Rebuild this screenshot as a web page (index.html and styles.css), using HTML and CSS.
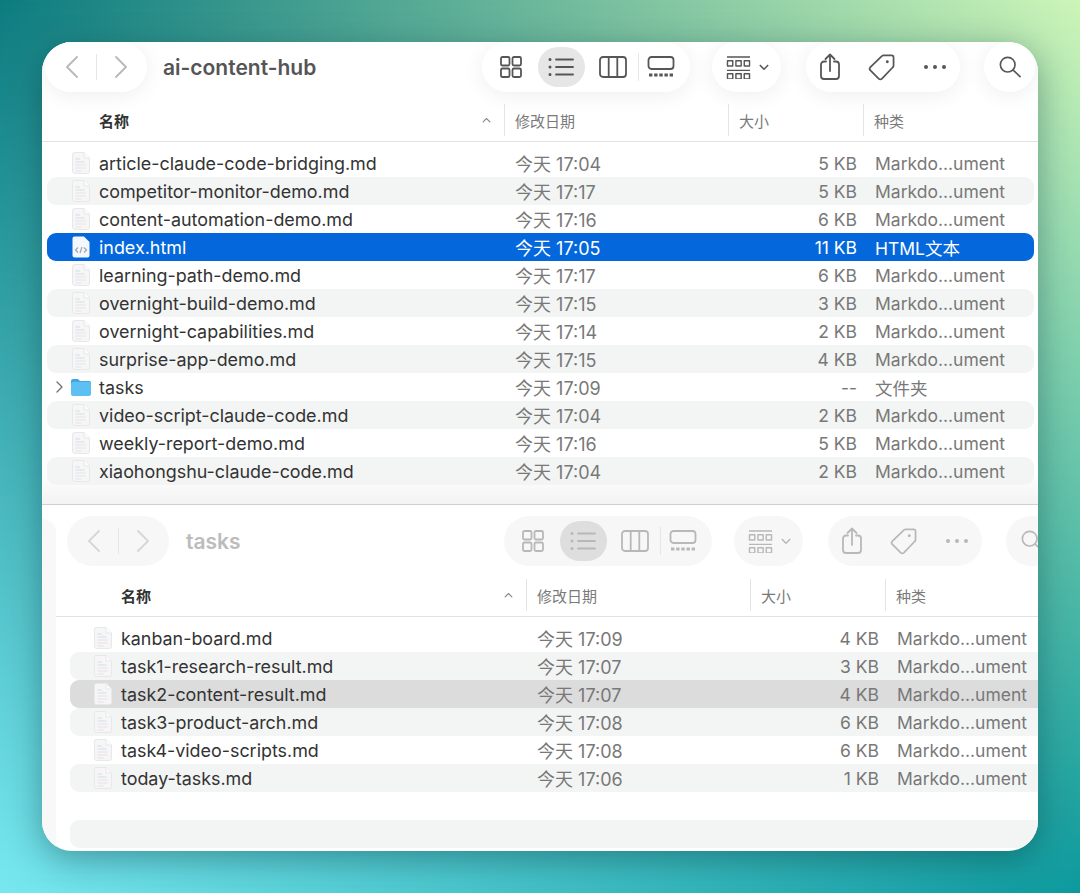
FILE: index.html
```html
<!DOCTYPE html>
<html lang="zh-CN">
<head>
  <meta charset="UTF-8" />
  <meta name="viewport" content="width=device-width, initial-scale=1.0"/>
  <title>ai-content-hub</title>
  <link rel="stylesheet" href="styles.css">
</head>
<body>

<svg class="sprites" width="0" height="0">
  <symbol id="i-back" viewBox="0 0 14 24"><path d="M12 2 2 12l10 10"/></symbol>
  <symbol id="i-forward" viewBox="0 0 14 24"><path d="m2 2 10 10L2 22"/></symbol>
  <symbol id="i-grid" viewBox="0 0 22 22"><rect x="1" y="1" width="8.5" height="8.5" rx="1.5"/><rect x="12.5" y="1" width="8.5" height="8.5" rx="1.5"/><rect x="1" y="12.5" width="8.5" height="8.5" rx="1.5"/><rect x="12.5" y="12.5" width="8.5" height="8.5" rx="1.5"/></symbol>
  <symbol id="i-list" viewBox="0 0 26 22"><path d="M8 3.500h17M8 11h17M8 18.500h17"/><path class="dots" d="M2 3.500h.01M2 11h.01M2 18.500h.01"/></symbol>
  <symbol id="i-columns" viewBox="0 0 28 22"><rect x="1" y="1" width="26" height="20" rx="3"/><path d="M9.700 1v20M18.300 1v20"/></symbol>
  <symbol id="i-gallery" viewBox="0 0 28 22"><rect x="1.500" y="1" width="25" height="12" rx="3"/><path class="dash" d="M2 19h24"/></symbol>
  <symbol id="i-group" viewBox="0 0 26 24"><path class="thin" d="M1 1h24M1 15h24"/><path class="thin" d="M1.500 5h5.500v5.500H1.500zM10.300 5h5.500v5.500h-5.500zM19 5h5.500v5.500H19zM1.500 18.500h5.500V24H1.500zM10.300 18.500h5.500V24h-5.500zM19 18.500h5.500V24H19z"/></symbol>
  <symbol id="i-chevron" viewBox="0 0 12 8"><path d="m1.500 1.500 4.500 4.500 4.500-4.500"/></symbol>
  <symbol id="i-share" viewBox="0 0 20 27"><path d="M6 8.500H4a3 3 0 0 0-3 3V23a3 3 0 0 0 3 3h12a3 3 0 0 0 3-3V11.500a3 3 0 0 0-3-3h-2"/><path d="M10 18V1.500M5.500 6 10 1.500 14.500 6"/></symbol>
  <symbol id="i-tag" viewBox="0 0 28 28"><path d="M16 1.500h8.500A2 2 0 0 1 26.500 3.500V12a3 3 0 0 1-1 2L14.500 25.500a2.500 2.500 0 0 1-3.500 0L2.500 17a2.500 2.500 0 0 1 0-3.500L14 2.500a3 3 0 0 1 2-1z"/><circle class="solid" cx="20" cy="8" r="1.500"/></symbol>
  <symbol id="i-more" viewBox="0 0 22 6"><circle class="solid" cx="2" cy="3" r="2"/><circle class="solid" cx="11" cy="3" r="2"/><circle class="solid" cx="20" cy="3" r="2"/></symbol>
  <symbol id="i-search" viewBox="0 0 24 24"><circle cx="9.500" cy="9.500" r="8"/><path d="m15.500 15.500 7.500 7"/></symbol>
  <symbol id="i-doc" viewBox="0 0 18 22">
    <path class="doc-page" d="M2.500.5H12L17.500 6v13.500a2 2 0 0 1-2 2h-13a2 2 0 0 1-2-2v-17a2 2 0 0 1 2-2z"/>
    <path class="doc-fold" d="M12 .5V6h5.500"/>
    <path class="doc-a" d="M3.500 7H8M3.500 10h9"/>
    <path class="doc-b" d="M3.500 13h10M3.500 16h10M3.500 19h6"/>
  </symbol>
  <symbol id="i-html" viewBox="0 0 18 22">
    <path class="html-page" d="M2.500.5H12L17.500 6v13.500a2 2 0 0 1-2 2h-13a2 2 0 0 1-2-2v-17a2 2 0 0 1 2-2z"/>
    <path class="html-code" d="M6 11.500 3.500 14 6 16.500M12 11.500l2.500 2.500-2.500 2.500M10 11l-2 6"/>
  </symbol>
  <symbol id="i-folder" viewBox="0 0 20 17">
    <path class="folder-back" d="M2 0h5l2 2h9a2 2 0 0 1 2 2v2H0V2a2 2 0 0 1 2-2z"/>
    <rect class="folder-front" y="3" width="20" height="14" rx="2"/>
  </symbol>
</svg>

<div class="desktop">
  <div class="window">

    <section class="pane pane-main">
      <div class="toolbar">
        <div class="capsule nav">
          <svg class="ic ic-nav"><use href="#i-back"/></svg>
          <span class="nav-sep"></span>
          <svg class="ic ic-nav"><use href="#i-forward"/></svg>
        </div>
        <h1 class="title">ai-content-hub</h1>
        <div class="capsule views">
          <span class="tool"><svg class="ic ic-grid"><use href="#i-grid"/></svg></span>
          <span class="tool on"><svg class="ic ic-list"><use href="#i-list"/></svg></span>
          <span class="tool tool-col"><svg class="ic ic-wide"><use href="#i-columns"/></svg></span>
          <span class="tool-sep"></span>
          <span class="tool tool-gal"><svg class="ic ic-wide"><use href="#i-gallery"/></svg></span>
        </div>
        <div class="capsule group">
          <svg class="ic ic-group"><use href="#i-group"/></svg>
          <svg class="ic ic-chev"><use href="#i-chevron"/></svg>
        </div>
        <div class="capsule actions">
          <svg class="ic ic-share"><use href="#i-share"/></svg>
          <svg class="ic ic-tag"><use href="#i-tag"/></svg>
          <svg class="ic ic-more"><use href="#i-more"/></svg>
        </div>
        <div class="capsule search">
          <svg class="ic ic-search"><use href="#i-search"/></svg>
        </div>
      </div>

      <div class="columns">
        <div class="col col-name">名称<svg class="ic ic-sort"><use href="#i-chevron"/></svg></div>
        <div class="col">修改日期</div>
        <div class="col">大小</div>
        <div class="col">种类</div>
      </div>

      <div class="rows">
        <div class="row"><span></span><svg class="ficon"><use href="#i-doc"/></svg><span class="name">article-claude-code-bridging.md</span><span class="meta date">今天 17:04</span><span class="meta size">5 KB</span><span class="meta kind">Markdo...ument</span></div>
        <div class="row alt"><span></span><svg class="ficon"><use href="#i-doc"/></svg><span class="name">competitor-monitor-demo.md</span><span class="meta date">今天 17:17</span><span class="meta size">5 KB</span><span class="meta kind">Markdo...ument</span></div>
        <div class="row"><span></span><svg class="ficon"><use href="#i-doc"/></svg><span class="name">content-automation-demo.md</span><span class="meta date">今天 17:16</span><span class="meta size">6 KB</span><span class="meta kind">Markdo...ument</span></div>
        <div class="row selected"><span></span><svg class="ficon"><use href="#i-html"/></svg><span class="name">index.html</span><span class="meta date">今天 17:05</span><span class="meta size">11 KB</span><span class="meta kind">HTML文本</span></div>
        <div class="row"><span></span><svg class="ficon"><use href="#i-doc"/></svg><span class="name">learning-path-demo.md</span><span class="meta date">今天 17:17</span><span class="meta size">6 KB</span><span class="meta kind">Markdo...ument</span></div>
        <div class="row alt"><span></span><svg class="ficon"><use href="#i-doc"/></svg><span class="name">overnight-build-demo.md</span><span class="meta date">今天 17:15</span><span class="meta size">3 KB</span><span class="meta kind">Markdo...ument</span></div>
        <div class="row"><span></span><svg class="ficon"><use href="#i-doc"/></svg><span class="name">overnight-capabilities.md</span><span class="meta date">今天 17:14</span><span class="meta size">2 KB</span><span class="meta kind">Markdo...ument</span></div>
        <div class="row alt"><span></span><svg class="ficon"><use href="#i-doc"/></svg><span class="name">surprise-app-demo.md</span><span class="meta date">今天 17:15</span><span class="meta size">4 KB</span><span class="meta kind">Markdo...ument</span></div>
        <div class="row"><svg class="ic ic-disclose"><use href="#i-forward"/></svg><svg class="ficon ficon-folder"><use href="#i-folder"/></svg><span class="name">tasks</span><span class="meta date">今天 17:09</span><span class="meta size">--</span><span class="meta kind">文件夹</span></div>
        <div class="row alt"><span></span><svg class="ficon"><use href="#i-doc"/></svg><span class="name">video-script-claude-code.md</span><span class="meta date">今天 17:04</span><span class="meta size">2 KB</span><span class="meta kind">Markdo...ument</span></div>
        <div class="row"><span></span><svg class="ficon"><use href="#i-doc"/></svg><span class="name">weekly-report-demo.md</span><span class="meta date">今天 17:16</span><span class="meta size">5 KB</span><span class="meta kind">Markdo...ument</span></div>
        <div class="row alt"><span></span><svg class="ficon"><use href="#i-doc"/></svg><span class="name">xiaohongshu-claude-code.md</span><span class="meta date">今天 17:04</span><span class="meta size">2 KB</span><span class="meta kind">Markdo...ument</span></div>
      </div>
    </section>

    <section class="pane pane-tasks">
      <div class="toolbar">
        <div class="capsule nav">
          <svg class="ic ic-nav"><use href="#i-back"/></svg>
          <span class="nav-sep"></span>
          <svg class="ic ic-nav"><use href="#i-forward"/></svg>
        </div>
        <h2 class="title">tasks</h2>
        <div class="capsule views">
          <span class="tool"><svg class="ic ic-grid"><use href="#i-grid"/></svg></span>
          <span class="tool on"><svg class="ic ic-list"><use href="#i-list"/></svg></span>
          <span class="tool tool-col"><svg class="ic ic-wide"><use href="#i-columns"/></svg></span>
          <span class="tool-sep"></span>
          <span class="tool tool-gal"><svg class="ic ic-wide"><use href="#i-gallery"/></svg></span>
        </div>
        <div class="capsule group">
          <svg class="ic ic-group"><use href="#i-group"/></svg>
          <svg class="ic ic-chev"><use href="#i-chevron"/></svg>
        </div>
        <div class="capsule actions">
          <svg class="ic ic-share"><use href="#i-share"/></svg>
          <svg class="ic ic-tag"><use href="#i-tag"/></svg>
          <svg class="ic ic-more"><use href="#i-more"/></svg>
        </div>
        <div class="capsule search">
          <svg class="ic ic-search"><use href="#i-search"/></svg>
        </div>
      </div>

      <div class="columns">
        <div class="col col-name">名称<svg class="ic ic-sort"><use href="#i-chevron"/></svg></div>
        <div class="col">修改日期</div>
        <div class="col">大小</div>
        <div class="col">种类</div>
      </div>

      <div class="rows">
        <div class="row"><span></span><svg class="ficon"><use href="#i-doc"/></svg><span class="name">kanban-board.md</span><span class="meta date">今天 17:09</span><span class="meta size">4 KB</span><span class="meta kind">Markdo...ument</span></div>
        <div class="row alt"><span></span><svg class="ficon"><use href="#i-doc"/></svg><span class="name">task1-research-result.md</span><span class="meta date">今天 17:07</span><span class="meta size">3 KB</span><span class="meta kind">Markdo...ument</span></div>
        <div class="row picked"><span></span><svg class="ficon"><use href="#i-doc"/></svg><span class="name">task2-content-result.md</span><span class="meta date">今天 17:07</span><span class="meta size">4 KB</span><span class="meta kind">Markdo...ument</span></div>
        <div class="row alt"><span></span><svg class="ficon"><use href="#i-doc"/></svg><span class="name">task3-product-arch.md</span><span class="meta date">今天 17:08</span><span class="meta size">6 KB</span><span class="meta kind">Markdo...ument</span></div>
        <div class="row"><span></span><svg class="ficon"><use href="#i-doc"/></svg><span class="name">task4-video-scripts.md</span><span class="meta date">今天 17:08</span><span class="meta size">6 KB</span><span class="meta kind">Markdo...ument</span></div>
        <div class="row alt"><span></span><svg class="ficon"><use href="#i-doc"/></svg><span class="name">today-tasks.md</span><span class="meta date">今天 17:06</span><span class="meta size">1 KB</span><span class="meta kind">Markdo...ument</span></div>
        <div class="row"></div>
        <div class="row alt"></div>
      </div>
    </section>

  </div>
</div>

</body>
</html>
```

FILE: styles.css
```css
* {
  margin: 0;
  padding: 0;
  box-sizing: border-box;
}

body {
  font-family: Inter, "Noto Sans CJK SC", sans-serif;
  color: #333;
  overflow: hidden;
}

.sprites {
  display: block;
  height: 0;
}

/* four corner wash: two horizontal ramps, the lower one faded in */
.desktop {
  position: relative;
  height: 893px;
  padding: 42px;
  background: linear-gradient(90deg, #0d7c80, #6db89b 50%, #cdf5b8);
}

.desktop::before {
  content: "";
  position: absolute;
  inset: 0;
  background: linear-gradient(90deg, #78e8f0, #0c999d);
  -webkit-mask-image: linear-gradient(180deg, transparent, #000);
  mask-image: linear-gradient(180deg, transparent, #000);
}

.window {
  position: relative;
  height: 809px;
  display: flex;
  flex-direction: column;
  background: #fff;
  border-radius: 30px;
  overflow: hidden;
  box-shadow: 0 8px 34px rgba(0, 40, 50, 0.38);
}

.pane {
  overflow: hidden;
}

.pane-main {
  height: 463px;
  background: linear-gradient(180deg, #fff 0, #fff 430px, #f3f3f3 100%);
  border-bottom: 1px solid #cfcfcf;
}

.pane-main > * {
  width: 996px;
}

/* second window peeks out behind the strip on the left */
.pane-tasks {
  position: relative;
  flex: 1;
  padding-left: 14px;
}

.pane-tasks::before {
  content: "";
  position: absolute;
  left: 0;
  top: 14px;
  bottom: 0;
  width: 14px;
  background: #f8f8f8;
  border-top-right-radius: 14px;
}

.pane-tasks > * {
  width: 996px;
  margin-left: 8px;
}

/* toolbar */
.toolbar {
  display: flex;
  align-items: center;
  height: 50px;
  padding: 0 3px;
}

.pane-tasks .toolbar {
  margin-top: 11px;
}

.capsule {
  display: flex;
  align-items: center;
  height: 50px;
  background: #fff;
  border-radius: 25px;
  box-shadow: 0 3px 22px rgba(0, 0, 0, 0.07);
  color: #565656;
  flex-shrink: 0;
}

.pane-tasks .capsule {
  background: #f7f7f7;
  box-shadow: none;
  color: #b8b8b8;
}

.ic {
  display: block;
  flex-shrink: 0;
  fill: none;
  stroke: currentColor;
  stroke-width: 1.800;
  stroke-linecap: round;
  stroke-linejoin: round;
  overflow: visible;
}

.dots {
  stroke-width: 3;
}

.dash {
  stroke-width: 3;
  stroke-dasharray: 3.400 1.750;
  stroke-linecap: butt;
}

.thin {
  stroke-width: 1.500;
  stroke-linecap: butt;
}

.solid {
  fill: currentColor;
  stroke: none;
}

.nav {
  width: 102px;
  justify-content: center;
  gap: 17px;
  color: #b8b8b8;
}

.pane-tasks .nav {
  color: #d6d6d6;
}

.ic-nav {
  width: 14px;
  height: 24px;
}

.nav-sep {
  width: 1px;
  height: 26px;
  background: #e6e6e6;
}

.title {
  flex: 1;
  margin-left: 16px;
  font-size: 21px;
  font-weight: 600;
  color: #555;
}

.pane-tasks .title {
  margin-left: 17px;
  color: #bcbcbc;
}

.views {
  width: 208px;
  padding-left: 4px;
  margin-right: 22px;
}

.tool {
  display: flex;
  align-items: center;
  justify-content: center;
  width: 47px;
  height: 40px;
  margin: 0 1.500px;
  border-radius: 20px;
}

.tool.on {
  background: #e6e6e6;
}

.pane-tasks .tool.on {
  background: #dedede;
}

.tool-col {
  margin-left: 3px;
}

.tool-gal {
  margin-left: -1px;
}

.tool-sep {
  width: 1px;
  height: 28px;
  background: #e6e6e6;
}

.ic-grid {
  width: 22px;
  height: 22px;
}

.ic-list {
  width: 26px;
  height: 22px;
}

.ic-wide {
  width: 28px;
  height: 22px;
}

.group {
  width: 69px;
  padding-left: 14px;
  gap: 8px;
  margin-right: 25px;
}

.ic-group {
  width: 25px;
  height: 23px;
}

.ic-chev {
  width: 10px;
  height: 7px;
}

.actions {
  width: 154px;
  justify-content: space-around;
  margin-right: 24px;
}

.ic-share {
  width: 20px;
  height: 27px;
  margin-top: -2px;
}

.ic-tag {
  width: 27px;
  height: 27px;
}

.ic-more {
  width: 22px;
  height: 6px;
}

.search {
  width: 51px;
  justify-content: center;
}

.ic-search {
  width: 22px;
  height: 22px;
}

/* column headers */
.columns {
  display: grid;
  grid-template-columns: 462px 224px 135px 1fr;
  height: 42px;
  margin-top: 8px;
  border-bottom: 1px solid #e2e2e2;
  padding-bottom: 3px;
  font-size: 15px;
  color: #7a7a7a;
}

.pane-tasks .columns {
  width: 1004px;
  margin: 9px 0 0;
  padding-left: 8px;
}

.col {
  display: flex;
  align-items: center;
  padding-left: 10px;
  border-left: 1px solid #e4e4e4;
  margin: 4px 0 2px;
}

.col-name {
  justify-content: space-between;
  padding: 0 12px 0 57px;
  border-left: 0;
  font-weight: 600;
  color: #333;
}

.ic-sort {
  width: 11px;
  height: 6px;
  transform: rotate(180deg);
  color: #8a8a8a;
  stroke-width: 1.500;
}

/* file rows */
.rows {
  padding-top: 7px;
}

.row {
  display: grid;
  grid-template-columns: var(--lead, 25px) 27px 416px 214px 128px 1fr;
  align-items: center;
  height: 28px;
  margin: 0 4px 0 5px;
  border-radius: 9px;
  font-size: 17.500px;
}

.pane-tasks .row {
  --lead: 24px;
  margin: 0 -8px 0 6px;
}

.alt {
  background: #f3f5f4;
}

.picked {
  background: #dcdcdc;
}

.selected {
  background: #0468dc;
  color: #fff;
}

.name {
  font-size: 17.900px;
}

.meta {
  color: #787878;
}

.date {
  font-size: 18px;
}

.selected .meta {
  color: #fff;
}

.size {
  text-align: right;
}

.kind {
  padding-left: 18px;
  white-space: nowrap;
}

.ficon {
  display: block;
  width: 18px;
  height: 22px;
}

.ficon-folder {
  width: 20px;
  height: 17px;
  margin-left: -1px;
}

.ic-disclose {
  width: 7px;
  height: 12px;
  margin-left: 9px;
  color: #6f6f6f;
  stroke-width: 2.500;
}

.doc-page {
  fill: #f6f6f6;
  stroke: #e8e8e8;
}

.doc-fold {
  fill: #fcfcfc;
  stroke: #e8e8e8;
}

.doc-a {
  fill: none;
  stroke: #dde8ee;
  stroke-width: 1.500;
}

.doc-b {
  fill: none;
  stroke: #ebe8f0;
  stroke-width: 1.500;
}

.html-page {
  fill: #f4f7fb;
}

.html-code {
  fill: none;
  stroke: #9aa7b5;
  stroke-width: 1.200;
}

.folder-back {
  fill: #3fa6e0;
}

.folder-front {
  fill: #5cc1f2;
}
```
